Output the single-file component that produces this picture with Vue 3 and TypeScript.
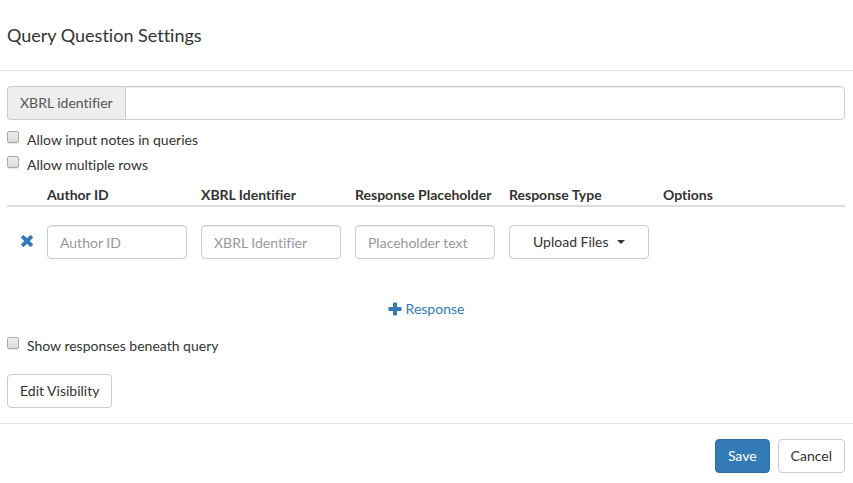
<script setup lang="ts">
import { reactive, ref } from 'vue'

interface ResponseRow {
  id: number
  author: string
  identifier: string
  placeholder: string
  type: string
}

const responseTypes = ['Upload Files', 'Text', 'Number', 'Date']
const identifier = ref('')
const allowNotes = ref(false)
const allowRows = ref(false)
const showBeneath = ref(false)
let nextId = 1

function blankRow(): ResponseRow {
  return { id: nextId++, author: '', identifier: '', placeholder: '', type: 'Upload Files' }
}

const rows = reactive<ResponseRow[]>([blankRow()])

function addRow(): void {
  rows.push(blankRow())
}

function removeRow(id: number): void {
  const index = rows.findIndex((row) => row.id === id)
  if (index >= 0) rows.splice(index, 1)
}
</script>

<template>
  <form class="dialog" @submit.prevent>
    <header class="dialog-header">
      <h1 class="title">Query Question Settings</h1>
    </header>

    <main class="dialog-body">
      <div class="input-group">
        <label class="addon" for="xbrl">XBRL identifier</label>
        <input id="xbrl" v-model="identifier" class="control" type="text" />
      </div>

      <div class="checks">
        <label class="check"><input v-model="allowNotes" type="checkbox" />Allow input notes in queries</label>
        <label class="check"><input v-model="allowRows" type="checkbox" />Allow multiple rows</label>
      </div>

      <table class="responses">
        <colgroup>
          <col class="col-remove" />
          <col v-for="n in 4" :key="n" class="col-field" />
          <col />
        </colgroup>
        <thead>
          <tr>
            <th></th>
            <th scope="col">Author ID</th>
            <th scope="col">XBRL Identifier</th>
            <th scope="col">Response Placeholder</th>
            <th scope="col">Response Type</th>
            <th scope="col">Options</th>
          </tr>
        </thead>
        <tbody>
          <tr v-for="row in rows" :key="row.id">
            <td>
              <button class="remove" type="button" aria-label="Remove response" @click="removeRow(row.id)">
                <svg width="14" height="14" viewBox="0 1 14 14" aria-hidden="true">
                  <path d="M3.9 1.2 7 4.2 10.1 1.2Q10.5.8 10.9 1.2L12.8 3.1Q13.2 3.5 12.8 3.9L9.8 7 12.8 10.1Q13.2 10.5 12.8 10.9L10.9 12.8Q10.5 13.2 10.1 12.8L7 9.8 3.9 12.8Q3.5 13.2 3.1 12.8L1.2 10.9Q.8 10.5 1.2 10.1L4.2 7 1.2 3.9Q.8 3.5 1.2 3.1L3.1 1.2Q3.5.8 3.9 1.2Z" fill="currentColor" />
                </svg>
              </button>
            </td>
            <td><input v-model="row.author" class="control" type="text" placeholder="Author ID" aria-label="Author ID" /></td>
            <td><input v-model="row.identifier" class="control" type="text" placeholder="XBRL Identifier" aria-label="XBRL Identifier" /></td>
            <td><input v-model="row.placeholder" class="control" type="text" placeholder="Placeholder text" aria-label="Response Placeholder" /></td>
            <td>
              <div class="type-picker">
                <select v-model="row.type" class="btn" aria-label="Response Type">
                  <option v-for="type in responseTypes" :key="type">{{ type }}</option>
                </select>
                <span class="caret"></span>
              </div>
            </td>
            <td></td>
          </tr>
        </tbody>
      </table>

      <div class="add-line">
        <button class="add" type="button" @click="addRow">
          <svg width="14" height="14" viewBox="0 0 14 14" aria-hidden="true">
            <path d="M5.4.5H8.6Q9 .5 9 .9V5H13.1Q13.5 5 13.5 5.4V8.6Q13.5 9 13.1 9H9V13.1Q9 13.5 8.6 13.5H5.4Q5 13.5 5 13.1V9H.9Q.5 9 .5 8.6V5.4Q.5 5 .9 5H5V.9Q5 .5 5.4.5Z" fill="currentColor" />
          </svg>
          <span>Response</span>
        </button>
      </div>

      <label class="check"><input v-model="showBeneath" type="checkbox" />Show responses beneath query</label>
      <button class="btn visibility" type="button">Edit Visibility</button>
    </main>

    <footer class="dialog-footer">
      <button class="btn primary" type="submit">Save</button>
      <button class="btn" type="button">Cancel</button>
    </footer>
  </form>
</template>

<style>
body {
  background: #fff;
}
</style>

<style scoped>
.dialog,
.dialog * {
  box-sizing: border-box;
}

.dialog {
  color: #333;
  font: 14px/20px Lato, "Liberation Sans", sans-serif;
  font-variant-ligatures: none;
}

.dialog button,
.dialog input,
.dialog select {
  font: inherit;
  font-variant-ligatures: none;
}

.dialog-header {
  padding: 22px 8px 22px 7px;
  border-bottom: 1px solid #e5e5e5;
}

.title {
  margin: 0;
  font-size: 18px;
  font-weight: 400;
  line-height: 26px;
}

.dialog-body {
  padding: 15px 8px 15px 7px;
}

.input-group {
  display: flex;
}

.addon {
  flex: none;
  padding: 6px 12px;
  border: 1px solid #ccc;
  border-right: 0;
  border-radius: 4px 0 0 4px;
  background: #eee;
  color: #555;
}

.control {
  display: block;
  width: 100%;
  height: 34px;
  padding: 6px 12px;
  border: 1px solid #ccc;
  border-radius: 4px;
  background: #fff;
  box-shadow: inset 0 1px 1px rgba(0, 0, 0, 0.075);
  color: #555;
}

.control::placeholder {
  color: #999;
  opacity: 1;
}

.input-group .control {
  flex: 1;
  min-width: 0;
  border-radius: 0 4px 4px 0;
}

.checks {
  display: flex;
  flex-direction: column;
  align-items: flex-start;
  gap: 5px;
  padding: 10px 0;
}

.check {
  display: flex;
  width: fit-content;
  align-items: flex-start;
  gap: 8px;
}

.check input {
  appearance: none;
  flex: none;
  width: 12px;
  height: 12px;
  margin: 1px 0 0;
  border: 1px solid #aaa;
  border-radius: 2px;
  background: linear-gradient(#eee, #dcdcdc);
  box-shadow: 0 1px 1px rgba(0, 0, 0, 0.1);
}

.check input:checked {
  background: #337ab7;
}

.responses {
  width: 100%;
  border-collapse: collapse;
  table-layout: fixed;
}

.col-remove {
  width: 40px;
}

.col-field {
  width: 154px;
}

.responses th {
  padding: 0;
  border-bottom: 2px solid #ddd;
  font-weight: 700;
  text-align: left;
  white-space: nowrap;
}

.responses td {
  padding: 18px 14px 0 0;
  vertical-align: middle;
}

.remove,
.add {
  padding: 0;
  border: 0;
  background: none;
  color: #337ab7;
  cursor: pointer;
}

.responses td:first-child {
  padding-right: 0;
}

.remove {
  display: block;
  margin: 0 auto;
}

.remove svg {
  display: block;
}

.type-picker {
  position: relative;
}

.btn {
  height: 34px;
  padding: 6px 12px;
  border: 1px solid #ccc;
  border-radius: 4px;
  background: #fff;
  color: #333;
  cursor: pointer;
}

.type-picker .btn {
  appearance: none;
  display: block;
  width: 100%;
  padding: 0 23px;
}

.caret {
  position: absolute;
  top: 15px;
  right: 24px;
  border-top: 4px solid #333;
  border-right: 4px solid transparent;
  border-left: 4px solid transparent;
  pointer-events: none;
}

.add-line {
  display: flex;
  justify-content: center;
  padding: 40px 0 17px;
}

.add {
  display: flex;
  align-items: center;
  gap: 4px;
}

.visibility {
  display: block;
  margin-top: 18px;
}

.dialog-footer {
  display: flex;
  justify-content: flex-end;
  gap: 8px;
  padding: 15px 8px 10px;
  border-top: 1px solid #e5e5e5;
}

.primary {
  border-color: #2e6da4;
  background: #337ab7;
  color: #fff;
}
</style>
